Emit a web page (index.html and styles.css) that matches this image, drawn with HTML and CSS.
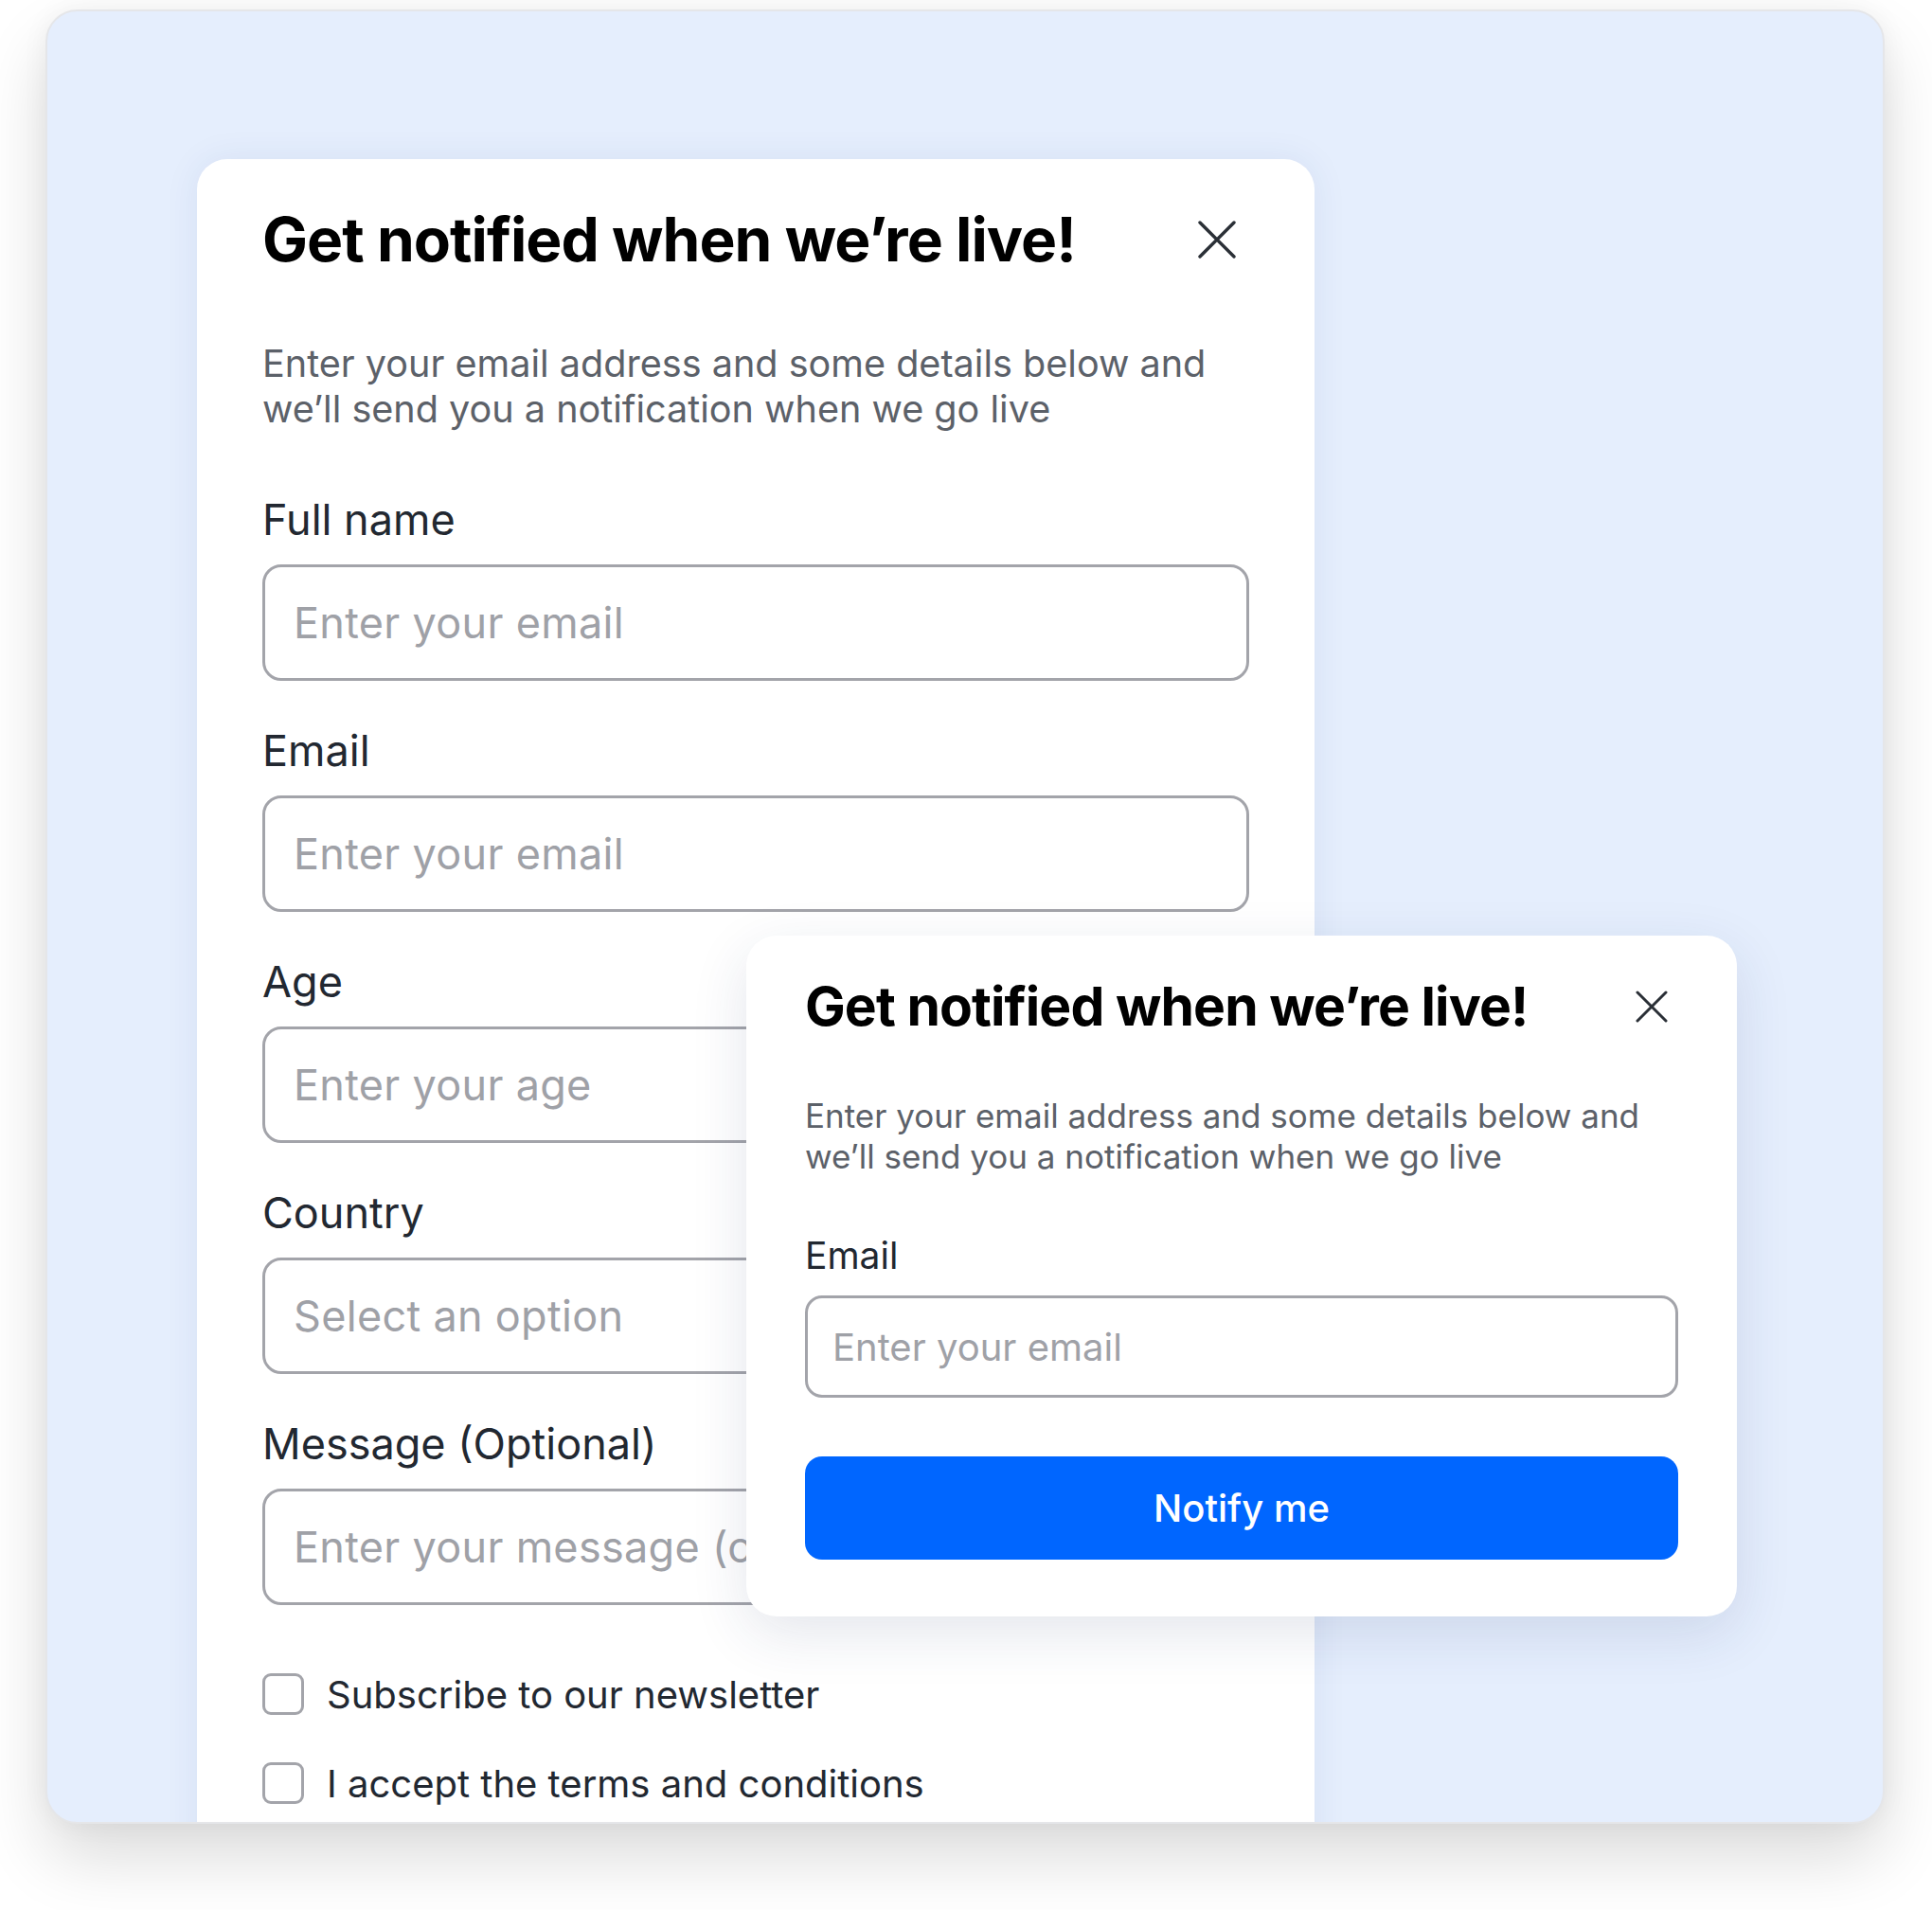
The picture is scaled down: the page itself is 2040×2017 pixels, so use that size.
FILE: index.html
```html
<!DOCTYPE html>
<html lang="en">
<head>
<meta charset="utf-8">
<title>Get notified</title>
<link rel="stylesheet" href="styles.css">
</head>
<body>
<div class="page">
  <div class="frame">
    <section class="card">
      <div class="card-head">
        <h1 class="title">Get notified when we’re live!</h1>
        <button class="close" aria-label="Close">
          <svg viewBox="0 0 40 40" width="40" height="40"><path d="M2 2 L38 38 M38 2 L2 38" fill="none" stroke="currentColor" stroke-width="3.4" stroke-linecap="round"/></svg>
        </button>
      </div>
      <p class="desc">Enter your email address and some details below and we’ll send you a notification when we go live</p>
      <div class="fields">
        <div class="field">
          <label class="label">Full name</label>
          <div class="input">Enter your email</div>
        </div>
        <div class="field">
          <label class="label">Email</label>
          <div class="input">Enter your email</div>
        </div>
        <div class="field">
          <label class="label">Age</label>
          <div class="input">Enter your age</div>
        </div>
        <div class="field">
          <label class="label">Country</label>
          <div class="input">Select an option</div>
        </div>
        <div class="field">
          <label class="label">Message (Optional)</label>
          <div class="input">Enter your message (optional)</div>
        </div>
      </div>
      <div class="checks">
        <div class="check"><span class="box"></span><span class="check-text">Subscribe to our newsletter</span></div>
        <div class="check"><span class="box"></span><span class="check-text">I accept the terms and conditions</span></div>
      </div>
    </section>

    <section class="modal">
      <div class="modal-head">
        <h2 class="modal-title">Get notified when we’re live!</h2>
        <button class="modal-close" aria-label="Close">
          <svg viewBox="0 0 34 34" width="34" height="34"><path d="M2 2 L32 32 M32 2 L2 32" fill="none" stroke="currentColor" stroke-width="3" stroke-linecap="round"/></svg>
        </button>
      </div>
      <p class="modal-desc">Enter your email address and some details below and we’ll send you a notification when we go live</p>
      <label class="modal-label">Email</label>
      <div class="modal-input">Enter your email</div>
      <button class="notify">Notify me</button>
    </section>
  </div>
</div>
</body>
</html>
```

FILE: styles.css
```css
* { box-sizing: border-box; }
html, body { margin: 0; padding: 0; background: #ffffff; }
body { font-family: Inter, "Noto Sans", "Liberation Sans", sans-serif; }

.page {
  padding: 10px 50px 91px 48px;
  min-height: 2017px;
}

.frame {
  position: relative;
  width: 1942px;
  height: 1916px;
  background: #e5eefd;
  border: 2px solid #e5e6e9;
  border-radius: 34px;
  overflow: hidden;
  padding: 156px 0 0 158px;
  box-shadow: 0 36px 70px rgba(0, 0, 0, 0.14), 0 0 28px rgba(0, 0, 0, 0.05);
}

.card {
  width: 1180px;
  background: #ffffff;
  border-radius: 32px 32px 0 0;
  padding: 47px 69px 80px;
  box-shadow: 0 0 36px rgba(40, 70, 130, 0.08);
}

.card-head {
  display: flex;
  align-items: center;
  justify-content: space-between;
}

.title {
  margin: 0;
  font-size: 64px;
  line-height: 1.2;
  font-weight: 700;
  color: #000000;
  letter-spacing: -0.015em;
}

.close, .modal-close {
  border: 0;
  background: none;
  padding: 0;
  color: #2a2f36;
  display: flex;
}
.close { margin-right: 14px; }

.desc {
  margin: 68px 0 0;
  font-size: 39.6px;
  line-height: 48px;
  color: #5c6169;
}

.fields {
  margin-top: 66px;
  display: flex;
  flex-direction: column;
  gap: 47px;
}

.field {
  display: flex;
  flex-direction: column;
  gap: 21px;
}

.label {
  font-size: 45px;
  line-height: 53px;
  color: #222831;
}

.input {
  height: 123px;
  border: 3px solid #a3a4aa;
  border-radius: 20px;
  padding-left: 30px;
  display: flex;
  align-items: center;
  font-size: 45px;
  letter-spacing: 0.3px;
  color: #9fa1a7;
  white-space: nowrap;
  overflow: hidden;
}

.checks {
  margin-top: 68px;
  display: flex;
  flex-direction: column;
  gap: 41px;
}

.check {
  display: flex;
  align-items: center;
  gap: 24px;
  height: 53px;
}

.box {
  width: 44px;
  height: 44px;
  border: 3px solid #a3a4aa;
  border-radius: 9px;
  flex: none;
}

.check-text {
  font-size: 40px;
  color: #222831;
}

/* Overlay modal */
.modal {
  position: absolute;
  left: 738px;
  top: 976px;
  width: 1046px;
  background: #ffffff;
  border-radius: 32px;
  padding: 41px 62px 60px;
  box-shadow: 0 18px 60px rgba(30, 50, 100, 0.12);
  display: flex;
  flex-direction: column;
}

.modal-head {
  display: flex;
  align-items: center;
  justify-content: space-between;
}

.modal-title {
  margin: 0;
  font-size: 57px;
  line-height: 1.2;
  font-weight: 700;
  color: #000000;
  letter-spacing: -0.016em;
}

.modal-close { margin-right: 11px; }

.modal-desc {
  margin: 60px 0 0;
  font-size: 35px;
  line-height: 43px;
  color: #5c6169;
}

.modal-label {
  margin-top: 59px;
  font-size: 39px;
  line-height: 47px;
  color: #222831;
}

.modal-input {
  margin-top: 19px;
  height: 108px;
  border: 3px solid #a3a4aa;
  border-radius: 18px;
  padding-left: 26px;
  display: flex;
  align-items: center;
  font-size: 40px;
  color: #9fa1a7;
}

.notify {
  margin-top: 62px;
  height: 109px;
  border: 0;
  border-radius: 18px;
  background: #0066ff;
  color: #ffffff;
  font-family: inherit;
  font-size: 40px;
  font-weight: 500;
}
```
